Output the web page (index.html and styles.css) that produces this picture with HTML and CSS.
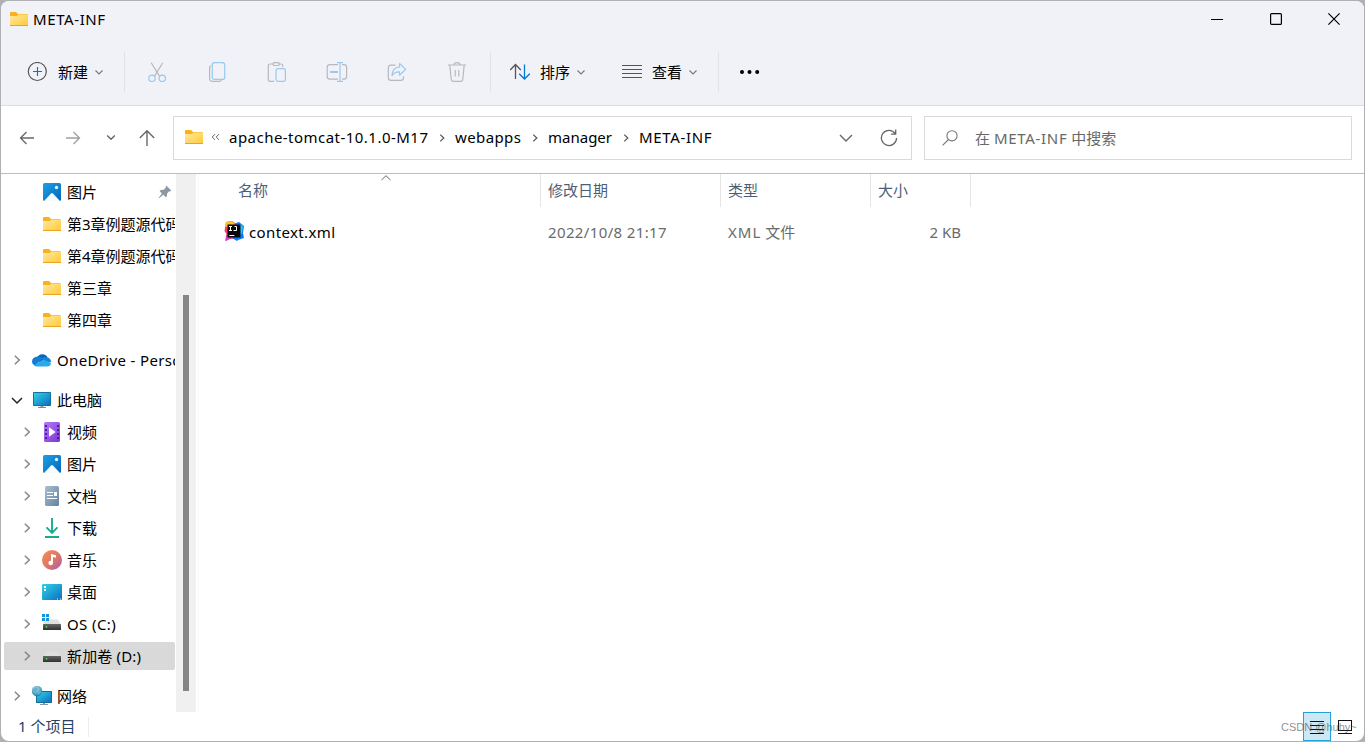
FILE: index.html
```html
<!DOCTYPE html>
<html lang="zh-CN">
<head>
<meta charset="utf-8">
<title>META-INF</title>
<link rel="stylesheet" href="styles.css">
</head>
<body>
<svg class="defs" width="0" height="0" aria-hidden="true">
  <defs>
    <linearGradient id="gFolder" x1="0" y1="0" x2="1" y2="1"><stop offset="0" stop-color="#ffe9a0"/><stop offset="1" stop-color="#ffc937"/></linearGradient>
    <linearGradient id="gBlue" x1="0" y1="0" x2="1" y2="1"><stop offset="0" stop-color="#1ba0e8"/><stop offset="1" stop-color="#0766b6"/></linearGradient>
    <linearGradient id="gScreen" x1="0" y1="0" x2="1" y2="1"><stop offset="0" stop-color="#31d3e4"/><stop offset="1" stop-color="#0b6ec2"/></linearGradient>
    <linearGradient id="gVideo" x1="0" y1="0" x2="1" y2="1"><stop offset="0" stop-color="#b779f5"/><stop offset="1" stop-color="#7a35d8"/></linearGradient>
    <linearGradient id="gDoc" x1="0" y1="0" x2="1" y2="1"><stop offset="0" stop-color="#a9bfd3"/><stop offset="1" stop-color="#64829f"/></linearGradient>
    <linearGradient id="gMusic" x1="0" y1="0" x2="1" y2="1"><stop offset="0" stop-color="#f59150"/><stop offset=".55" stop-color="#dd7568"/><stop offset="1" stop-color="#a45cb0"/></linearGradient>
    <radialGradient id="gGlobe" cx=".4" cy=".3" r=".7"><stop offset="0" stop-color="#b5e0f2"/><stop offset="1" stop-color="#257fb0"/></radialGradient>
    <linearGradient id="gDisk" x1="0" y1="0" x2="0" y2="1"><stop offset="0" stop-color="#666"/><stop offset="1" stop-color="#303030"/></linearGradient>
  </defs>
  <symbol id="folder" viewBox="0 0 20 20"><path d="M1 4q0-1 1-1h5l2 2h9.500v5H1z" fill="#f9b21c"/><path d="M1 7h7l1.500-1.500H18q1 0 1 1V16q0 1-1 1H2q-1 0-1-1z" fill="url(#gFolder)"/><path d="M1 16.500h18" stroke="#eaa51c"/></symbol>
  <symbol id="image" viewBox="0 0 20 20"><rect x="1" y="1" width="18" height="18" rx="1.500" fill="url(#gBlue)"/><path d="M2 19l7-7.600q1-1 2 0L18 19z" fill="#f4faff"/><circle cx="14.500" cy="5.500" r="1.700" fill="#e2f4ff"/></symbol>
  <symbol id="pin" viewBox="0 0 14 14"><path d="M8.500.8l4.700 4.700-1 .9-.9-.2-2.200 2.300-.2 2.800-1 1-2.500-2.600L1 13.300.5 13l3.400-4.500L1.600 6l1-.9 3-.4 2.200-2-.2-1z" fill="#8c98a3"/></symbol>
  <symbol id="cloud" viewBox="0 0 20 14"><path d="M4 8.500A4.500 4.500 0 0 1 6 3.300 5.600 5.600 0 0 1 15.600 4.600L10 9z" fill="#0b65bd"/><path d="M6 3.600q2.500 0 4.500 2L3 12.500Q0 11.500 0 8.600 0 4.200 6 3.600z" fill="#117dd5"/><path d="M9.500 5.500Q12 3.800 15.600 4.600q3 .8 3.600 4.400L15 10z" fill="#1685d8"/><path d="M2 12.200L10 7.300q1.500-.9 3-.1l6 3q-.6 3.300-3.500 3.300h-11q-1.500 0-2.500-1.300z" fill="#2ca9ed"/></symbol>
  <symbol id="pc" viewBox="0 0 20 20"><path d="M8.500 15h3v2h-3z" fill="#8999a5"/><rect x="1" y="2" width="18" height="14" rx=".8" fill="#176f9f"/><rect x="2" y="3" width="16" height="12" fill="url(#gScreen)"/><path d="M6 17.500h8" stroke="#7f8a92"/></symbol>
  <symbol id="video" viewBox="0 0 20 20"><rect x="2" y="0" width="16" height="20" rx="1.500" fill="url(#gVideo)"/><path d="M4 3v15M16 3v15" stroke="#4e2289" stroke-width="2" stroke-dasharray="2 2"/><path d="M7 5.300v9.400l6.700-4.700z" fill="#fff"/></symbol>
  <symbol id="doc" viewBox="0 0 20 20"><rect x="3" y="0" width="14" height="20" rx="1.500" fill="url(#gDoc)"/><path d="M5 6.500h6M5 9.500h6M5 12.500h10" stroke="#fff"/><path d="M12 6h3v4h-3z" fill="#fff"/></symbol>
  <symbol id="download" viewBox="0 0 20 20"><path d="M10 0v14.500M4.500 9.300l5.500 5.500 5.500-5.500M3 19h14" fill="none" stroke="#16ad8e" stroke-width="1.900"/></symbol>
  <symbol id="music" viewBox="0 0 20 20"><circle cx="10" cy="10" r="10" fill="url(#gMusic)"/><path d="M9 4l5 1.200v2.600L11 7.100v5.900a2.300 2.200 0 1 1-2-2.200z" fill="#fff"/></symbol>
  <symbol id="desktop" viewBox="0 0 20 20"><rect y="2" width="20" height="16" rx="1" fill="url(#gScreen)"/><path d="M2 4h2v2H2zM2 7h2v2H2z" fill="#fff"/><path d="M15 17h1m2 0h1" stroke="#fff"/></symbol>
  <symbol id="disk" viewBox="0 0 20 20"><path d="M4 5.500h12l3 5H1z" fill="#dedfe1"/><rect x="1" y="10" width="18" height="6" rx=".5" fill="url(#gDisk)"/><circle cx="4.500" cy="12.800" r=".9" fill="#34ee4b"/></symbol>
  <symbol id="network" viewBox="0 0 20 20"><path d="M11 16h2v2h-2z" fill="#8999a5"/><rect x="4" y="5" width="16" height="12" rx=".7" fill="#126a9d"/><rect x="5" y="6" width="14" height="10" fill="url(#gScreen)"/><path d="M8 18.500h8" stroke="#8798a4"/><circle cx="5" cy="5" r="5.200" fill="url(#gGlobe)"/><path d="M1 3l3-2 2 2-2 3-3-1zM6 6l3-1v2L6 9z" fill="#61b3c7"/></symbol>
  <symbol id="down" viewBox="0 0 10 10"><path d="M1.500 3.500L5 7l3.500-3.500" fill="none" stroke="currentColor" stroke-width="1.100"/></symbol>
  <symbol id="right" viewBox="0 0 10 10"><path d="M2.800.8L7.300 5 2.800 9.200" fill="none" stroke="currentColor" stroke-width="1.500"/></symbol>
</svg>

<main class="window">
  <header class="titlebar">
    <svg class="ico title-folder"><use href="#folder"/></svg>
    <h1 class="title">META-INF</h1>
    <div class="controls">
      <svg width="12" height="12"><path d="M0 6.500h12" stroke="#000"/></svg>
      <svg width="12" height="12"><rect x=".6" y=".6" width="10.800" height="10.800" rx="1" fill="none" stroke="#000" stroke-width="1.200"/></svg>
      <svg width="12" height="12"><path d="M.4.4l11.200 11.200M11.600.4L.4 11.600" stroke="#000" stroke-width="1.200"/></svg>
    </div>
  </header>

  <nav class="toolbar">
    <div class="tool tool-new">
      <svg width="20" height="20" fill="none"><circle cx="10.300" cy="9.500" r="9" stroke="#555" stroke-width="1.200"/><path d="M10.500 5v9M6 9.500h9" stroke="#0078d4" stroke-width="1.200"/></svg>
      <span class="label">新建</span><svg class="chev"><use href="#down"/></svg>
    </div>
    <div class="actions">
      <svg width="20" height="20" fill="none" stroke-width="1.200"><path d="M4.200.7l8.300 13.400M15.800.7L7.500 14.100" stroke="#b8b8bc"/><circle cx="5" cy="16.300" r="3.200" stroke="#99c9ee"/><circle cx="15.300" cy="16.300" r="3.200" stroke="#99c9ee"/></svg>
      <svg width="20" height="20" fill="none" stroke-width="1.200"><path d="M4.300 3.500q-1.700.6-1.700 2v10.700q0 3.200 3 3.200H12q1.500 0 2.500-1.400" stroke="#b8b8bc"/><rect x="5.300" y=".6" width="12.400" height="16.800" rx="2.200" stroke="#99c9ee"/></svg>
      <svg width="20" height="20" fill="none" stroke-width="1.200"><path d="M6 2H3q-1.700 0-1.700 1.700v14q0 1.700 1.700 1.700h4M12 2h2q1.700 0 1.700 1.700V5" stroke="#b8b8bc"/><rect x="6" y=".7" width="6.500" height="2.800" rx="1.400" stroke="#b8b8bc"/><rect x="9" y="6.600" width="9.400" height="12.800" rx="1.800" stroke="#99c9ee"/></svg>
      <svg width="22" height="20" fill="none" stroke-width="1.200"><path d="M12 2.600H4q-2.800 0-2.800 2.700v9.200q0 2.700 2.800 2.700h8M16 2.600h2q2.600 0 2.600 2.700v9.200q0 2.700-2.600 2.700h-2" stroke="#b8b8bc"/><path d="M11 .7h6M14 .7v18.700M11 19.400h6" stroke="#99c9ee"/><path d="M4 10h8" stroke="#99c9ee" stroke-width="2"/></svg>
      <svg width="20" height="20" fill="none" stroke-width="1.200"><path d="M8.500 3.200H4q-2.700 0-2.700 2.700v9.800q0 2.700 2.700 2.700h9.800q2.700 0 2.700-2.700v-1.500" stroke="#b8b8bc"/><path d="M12.500 1.500l6.200 5.900-6.200 5.800V9.900Q7.300 9.800 5 13.600 5.400 5.400 12.500 5z" stroke="#99c9ee" stroke-linejoin="round"/></svg>
      <svg width="20" height="20" fill="none" stroke="#b8b8bc" stroke-width="1.200"><path d="M1 3h18M7 3q0-2.300 3-2.300T13 3M2.800 3l1.400 14.200q.2 2.100 2.300 2.100h7q2.100 0 2.300-2.100L17.200 3M8.200 8v6.500M11.800 8v6.500"/></svg>
    </div>
    <div class="tool tool-sort">
      <svg width="22" height="20" fill="none" stroke-width="1.300"><path d="M6.500 17V2.500M1.200 8l5.300-5.500L11.800 8" stroke="#555"/><path d="M15.500 2.500V17M10.200 11.700l5.300 5.300 5.300-5.300" stroke="#0078d4"/></svg>
      <span class="label">排序</span><svg class="chev"><use href="#down"/></svg>
    </div>
    <div class="tool tool-view">
      <svg width="20" height="20"><path d="M0 3.500h20M0 7.500h20M0 11.500h20M0 15.500h20" stroke="#555"/></svg>
      <span class="label">查看</span><svg class="chev"><use href="#down"/></svg>
    </div>
    <div class="tool-more"><svg width="22" height="6"><circle cx="3" cy="3" r="2"/><circle cx="10.500" cy="3" r="2"/><circle cx="18.200" cy="3" r="2"/></svg></div>
  </nav>

  <section class="addressbar">
    <div class="history">
      <svg width="16" height="16" fill="none" stroke="#666" stroke-width="1.300"><path d="M15 8H1.500M7.500 2l-6 6 6 6"/></svg>
      <svg width="16" height="16" fill="none" stroke="#a0a0a0" stroke-width="1.300"><path d="M1 8h13.500M8.500 2l6 6-6 6"/></svg>
      <svg class="recent" width="10" height="10" fill="none" stroke="#666" stroke-width="1.400"><path d="M1.200 2.500L5 6.300l3.800-3.800"/></svg>
      <svg width="16" height="18" fill="none" stroke="#666" stroke-width="1.400"><path d="M8 17V2M.8 9L8 1.800 15.200 9"/></svg>
    </div>
    <div class="path">
      <svg class="ico"><use href="#folder"/></svg>
      <svg class="dbl" width="9" height="8" fill="none" stroke="#666"><path d="M4 1.200L1.200 4 4 6.800M8 1.200L5.200 4 8 6.800"/></svg>
      <span class="crumb c1">apache-tomcat-10.1.0-M17</span><svg class="sep"><use href="#right"/></svg>
      <span class="crumb c2">webapps</span><svg class="sep"><use href="#right"/></svg>
      <span class="crumb c3">manager</span><svg class="sep"><use href="#right"/></svg>
      <span class="crumb c4">META-INF</span>
      <svg class="drop" width="14" height="8" fill="none" stroke="#666" stroke-width="1.400"><path d="M1 1l6 6 6-6"/></svg>
      <svg class="refresh" width="18" height="18" fill="none" stroke="#666" stroke-width="1.300"><path d="M15.200 4.500A7.600 7.600 0 1 0 16.600 9M15.700.5v4.600h-4.600"/></svg>
    </div>
    <div class="search">
      <svg width="16" height="16" fill="none" stroke="#777" stroke-width="1.100"><circle cx="10" cy="5.800" r="5.100"/><path d="M6.500 9.500L.6 15.400"/></svg>
      <span class="placeholder">在 <span class="wide">META-INF</span> 中搜索</span>
    </div>
  </section>

  <div class="content">
    <aside class="sidebar">
      <div class="tree">
        <div class="row leaf"><svg class="ico"><use href="#image"/></svg><span>图片</span><svg class="pin"><use href="#pin"/></svg></div>
        <div class="row leaf"><svg class="ico"><use href="#folder"/></svg><span>第3章例题源代码</span></div>
        <div class="row leaf"><svg class="ico"><use href="#folder"/></svg><span>第4章例题源代码</span></div>
        <div class="row leaf"><svg class="ico"><use href="#folder"/></svg><span>第三章</span></div>
        <div class="row leaf"><svg class="ico"><use href="#folder"/></svg><span>第四章</span></div>
        <div class="row top"><svg class="arrow"><use href="#right"/></svg><svg class="ico"><use href="#cloud"/></svg><span class="onedrive">OneDrive - Personal</span></div>
        <div class="row top"><svg class="arrow open" viewBox="0 0 14 14"><path d="M2 5l5 5 5-5" fill="none" stroke="#222" stroke-width="1.500"/></svg><svg class="ico"><use href="#pc"/></svg><span>此电脑</span></div>
        <div class="row"><svg class="arrow"><use href="#right"/></svg><svg class="ico"><use href="#video"/></svg><span>视频</span></div>
        <div class="row"><svg class="arrow"><use href="#right"/></svg><svg class="ico"><use href="#image"/></svg><span>图片</span></div>
        <div class="row"><svg class="arrow"><use href="#right"/></svg><svg class="ico"><use href="#doc"/></svg><span>文档</span></div>
        <div class="row"><svg class="arrow"><use href="#right"/></svg><svg class="ico"><use href="#download"/></svg><span>下载</span></div>
        <div class="row"><svg class="arrow"><use href="#right"/></svg><svg class="ico"><use href="#music"/></svg><span>音乐</span></div>
        <div class="row"><svg class="arrow"><use href="#right"/></svg><svg class="ico"><use href="#desktop"/></svg><span>桌面</span></div>
        <div class="row"><svg class="arrow"><use href="#right"/></svg><svg class="ico" viewBox="0 0 20 20"><use href="#disk" width="20" height="20"/><path d="M0 0h3v3H0zM4 0h3v3H4zM0 4h3v3H0zM4 4h3v3H4z" fill="#1493df"/></svg><span class="drive-c">OS (C:)</span></div>
        <div class="row selected"><svg class="arrow"><use href="#right"/></svg><svg class="ico"><use href="#disk"/></svg><span class="drive-d">新加卷 (D:)</span></div>
        <div class="row top last"><svg class="arrow"><use href="#right"/></svg><svg class="ico"><use href="#network"/></svg><span>网络</span></div>
      </div>
      <div class="scrollbar"><div class="thumb"></div></div>
    </aside>

    <section class="files">
      <div class="columns">
        <span class="col name">名称<svg class="sort-mark" width="10" height="6" fill="none" stroke="#666"><path d="M.5 5L5 .7 9.500 5"/></svg></span>
        <span class="col">修改日期</span><span class="col">类型</span><span class="col">大小</span>
      </div>
      <div class="file">
        <span class="fname"><svg class="ico" viewBox="0 0 20 20"><path d="M2 1l6-1 3 2 5 1-1 14-9 1-5 2 1.500-7L.500 10 1 7z" fill="#fb376c"/><path d="M2 1l6-1 3 3-6 4-4-2z" fill="#ffbf27"/><path d="M12 2l3-1 5 4-1 7 1 5-6 2-1 1-5-3 6-4z" fill="#087cfa"/><path d="M16 3l3 2-1 7-2 2z" fill="#2bc6f7"/><path d="M2 15l5 2-5 3z" fill="#d343cb"/><rect x="3.500" y="3.500" width="13" height="13" fill="#08080a"/><path d="M5 5.500h3M6.500 5.500v4M5 9.500h3M10.500 5.500h2v4H9.500" fill="none" stroke="#fff"/><path d="M5.300 14.500h5" stroke="#fff"/></svg><span class="fn">context.xml</span></span>
        <span class="date">2022/10/8 21:17</span><span class="type"><span class="xml">XML</span> 文件</span><span class="size">2 KB</span>
      </div>
    </section>
  </div>

  <footer class="status">
    <span class="count">1 个项目</span>
    <div class="views">
      <span class="view active"><svg width="14" height="14" stroke="#111"><path d="M0 1.500h14M0 5.500h14M0 9.500h14M0 13.500h14"/></svg></span>
      <span class="view"><svg width="14" height="14" stroke="#111" fill="none"><rect x=".5" y=".5" width="13" height="10"/><path d="M0 13.500h14"/></svg></span>
    </div>
    <span class="watermark">CSDN @huhy~</span>
  </footer>
</main>
</body>
</html>
```

FILE: styles.css
```css
* { box-sizing: border-box; }
body {
  margin: 0;
  width: 1365px;
  height: 742px;
  padding: 1px;
  overflow: hidden;
  background: #b0b0b2;
  font: 15px/20px "Noto Sans", "Noto Sans CJK SC", sans-serif;
  color: #000;
}
svg { display: block; flex: none; }
.defs { position: absolute; }
.window {
  width: 1363px;
  height: 740px;
  display: flex;
  flex-direction: column;
  background: #fff;
  border-radius: 8px;
  overflow: hidden;
}
.ico { width: 20px; height: 20px; }

.titlebar {
  height: 38px;
  display: flex;
  align-items: center;
  padding: 0 24px 2px 8px;
  background: #f1f2f8;
}
.title { margin: 0 0 0 4px; font-size: 15px; font-weight: 400; letter-spacing: 0.6px; }
.controls { margin-left: auto; display: flex; gap: 46.500px; }

.toolbar {
  height: 67px;
  display: flex;
  align-items: center;
  background: #f1f2f8;
  border-bottom: 1px solid #dcdde3;
}
.tool { display: flex; align-items: center; height: 40px; }
.tool .label { margin: 0 5px 0 11px; width: 31px; white-space: nowrap; }
.chev { width: 10px; height: 10px; color: #777; }
.tool-new { width: 124px; padding-left: 26px; border-right: 1px solid #e1e2e8; }
.actions {
  width: 366px;
  height: 40px;
  display: grid;
  grid-template-columns: repeat(6, 60px);
  place-items: center;
  padding-left: 2px;
  border-right: 1px solid #e1e2e8;
}
.tool-sort { width: 131px; padding-left: 18px; }
.tool-sort .label { margin-left: 9px; }
.tool-view { width: 97px; border-right: 1px solid #e1e2e8; }
.tool-view .label { margin-left: 10px; }
.tool-more { padding-left: 20px; }

.addressbar {
  height: 68px;
  display: flex;
  align-items: center;
  padding: 0 12px 4px 0;
  border-bottom: 1px solid #bcbcbc;
}
.history { width: 172px; display: flex; align-items: center; padding: 1px 0 0 18px; }
.history svg:nth-child(2) { margin-left: 30px; }
.recent { margin: 0 23px 0 24.500px; }
.path {
  width: 739px;
  height: 44px;
  display: flex;
  align-items: center;
  padding: 0 13px 0 10px;
  border: 1px solid #d9d9d9;
}
.path .ico { margin-top: -1px; }
.dbl { margin: -1px 9px 0 7px; }
.crumb { white-space: nowrap; margin-top: -2px; }
.c1 { width: 200px; letter-spacing: 0.470px; }
.c2 { width: 67px; letter-spacing: 0.400px; }
.c3 { width: 65px; }
.c4 { letter-spacing: 0.650px; }
.sep { width: 8px; height: 8px; margin: 0 9px; color: #555; }
.drop { margin-left: auto; }
.refresh { margin-left: 27px; }
.search {
  width: 428px;
  height: 44px;
  margin-left: 12px;
  display: flex;
  align-items: center;
  padding-left: 17px;
  border: 1px solid #d9d9d9;
  color: #686868;
}
.placeholder { margin: 0 0 0 17px; }
.wide { letter-spacing: 0.700px; }

.content { height: 538px; display: flex; }
.sidebar { width: 195px; display: flex; }
.tree { width: 174px; padding: 2px 0 0 3px; overflow: hidden; }
.row {
  height: 32px;
  display: flex;
  align-items: center;
  padding-left: 18px;
  white-space: nowrap;
  overflow: hidden;
}
.row span { margin-left: 5px; }
.row .onedrive { letter-spacing: 0.350px; }
.row .drive-c { letter-spacing: 0.400px; }
.row .drive-d { letter-spacing: 0.150px; }
.row .arrow { width: 10px; height: 10px; margin-right: 10px; color: #858585; }
.row .arrow.open { width: 14px; height: 14px; margin: 0 8px 0 -2px; }
.row.leaf { padding-left: 38px; }
.row.top { padding-left: 8px; margin-top: 8px; }
.row.selected { height: 28px; margin: 2px 0; background: #d9d9d9; border-radius: 2px; }
.row.last { margin-top: 10px; }
.row .pin { width: 14px; height: 14px; margin: 0 3px 0 auto; }
.scrollbar { width: 20px; margin-left: 1px; padding: 121px 7px 0; background: #f0f0f0; }
.thumb { height: 396px; width: 6px; background: #858585; }

.files { flex: 1; margin-left: 2px; border-left: 1px solid #f8f8f8; }
.columns {
  height: 33px;
  display: grid;
  grid-template-columns: 342px 180px 150px 100px;
  color: #4b5f79;
}
.col { padding: 6px 0 0 7px; border-right: 1px solid #e5e5e5; }
.name { position: relative; padding-left: 39px; }
.sort-mark { position: absolute; left: 182px; top: 1px; }
.file {
  height: 32px;
  margin-top: 9px;
  display: grid;
  grid-template-columns: 349px 180px 150px 83px;
  align-items: center;
  color: #6b6b6b;
}
.fname { display: flex; align-items: center; padding-left: 25px; color: #000; }
.fname .ico { margin-top: -2px; }
.fn { margin-left: 5px; letter-spacing: 0.370px; }
.date { letter-spacing: 0.370px; }
.xml { letter-spacing: 1px; }
.size { text-align: right; }

.status { position: relative; height: 29px; display: flex; align-items: center; padding-left: 17px; color: #28415f; }
.count { width: 71px; height: 20px; line-height: 18px; border-right: 1px solid #eee; white-space: nowrap; }
.views { margin-left: auto; display: flex; padding-right: 5px; }
.view { width: 28px; height: 29px; display: grid; place-items: center; }
.active { background: #cce8f4; border: 1px solid #26a0da; }
.watermark { position: absolute; left: 1280px; top: 7px; font: 11px/16px "Liberation Sans", sans-serif; color: rgba(80, 80, 80, .65); }
```
